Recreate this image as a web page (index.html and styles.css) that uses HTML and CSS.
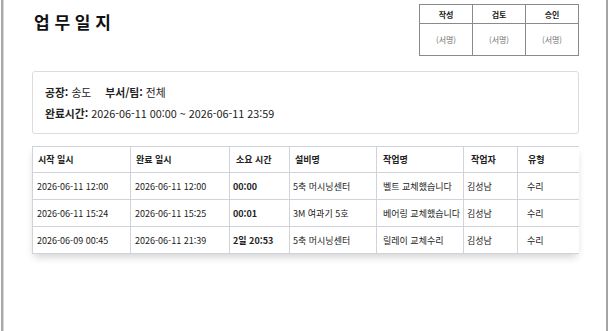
FILE: index.html
```html
<!DOCTYPE html>
<html lang="ko">
<head>
<meta charset="utf-8">
<title>업무일지</title>
<link rel="stylesheet" href="styles.css">
</head>
<body>
<div class="frame">
  <div class="page">
    <header class="top">
      <h1 class="title">업 무 일 지</h1>
      <table class="approval">
        <tr class="ap-head"><th>작성</th><th>검토</th><th>승인</th></tr>
        <tr class="ap-sign"><td>(서명)</td><td>(서명)</td><td>(서명)</td></tr>
      </table>
    </header>

    <section class="info">
      <div class="info-line">
        <span class="item"><b>공장:</b> 송도</span>
        <span class="item"><b>부서/팀:</b> 전체</span>
      </div>
      <div class="info-line">
        <span class="item"><b>완료시간:</b> 2026-06-11 00:00 ~ 2026-06-11 23:59</span>
      </div>
    </section>

    <table class="log">
      <colgroup>
        <col class="c1"><col class="c2"><col class="c3"><col class="c4"><col class="c5"><col class="c6"><col class="c7">
      </colgroup>
      <thead>
        <tr><th>시작 일시</th><th>완료 일시</th><th>소요 시간</th><th>설비명</th><th>작업명</th><th>작업자</th><th>유형</th></tr>
      </thead>
      <tbody>
        <tr><td>2026-06-11 12:00</td><td>2026-06-11 12:00</td><td class="dur">00:00</td><td>5축 머시닝센터</td><td>벨트 교체했습니다</td><td>김성남</td><td>수리</td></tr>
        <tr><td>2026-06-11 15:24</td><td>2026-06-11 15:25</td><td class="dur">00:01</td><td>3M 여과기 5호</td><td>베어링 교체했습니다</td><td>김성남</td><td>수리</td></tr>
        <tr><td>2026-06-09 00:45</td><td>2026-06-11 21:39</td><td class="dur">2일 20:53</td><td>5축 머시닝센터</td><td>릴레이 교체수리</td><td>김성남</td><td>수리</td></tr>
      </tbody>
    </table>
  </div>
</div>
</body>
</html>
```

FILE: styles.css
```css
* { box-sizing: border-box; }

html, body {
  margin: 0;
  padding: 0;
  background: #ffffff;
}

body {
  font-family: "Noto Sans CJK KR", "Noto Sans", sans-serif;
  color: #222;
}

.frame {
  width: 607px;
  height: 331px;
  border-left: 2px solid #a9a9a9;
  border-right: 2px solid #a4a4a4;
  box-shadow: inset 1px 0 0 #d8d8d8;
  margin-left: 1px;
  overflow: hidden;
}

.page {
  padding: 4px 27px 0 29px;
}

.top {
  display: flex;
  justify-content: space-between;
  align-items: flex-start;
}

.title {
  margin: 8px 0 0 2px;
  font-size: 17px;
  line-height: 20px;
  font-weight: 700;
  color: #111;
  letter-spacing: 0;
}

.approval {
  border-collapse: collapse;
  width: 160px;
  table-layout: fixed;
  font-size: 8px;
}

.approval th,
.approval td {
  border: 1px solid #8a8a8a;
  text-align: center;
  padding: 0;
}

.approval th {
  height: 19px;
  font-weight: 700;
  color: #222;
}

.approval td {
  height: 32px;
  color: #6f6f6f;
}

.info {
  margin-top: 15px;
  border: 1px solid #dcdcdc;
  border-radius: 3px;
  padding: 10px 12px 9px;
  font-size: 10.8px;
  line-height: 21px;
  color: #222;
}

.info-line {
  display: flex;
  gap: 14px;
}

.info b {
  font-weight: 700;
}

.log {
  margin-top: 12px;
  width: 546px;
  border-collapse: collapse;
  table-layout: fixed;
  font-size: 9px;
  box-shadow: 0 5px 8px -2px rgba(0, 0, 0, 0.18);
  background: #fff;
}

.c1 { width: 98px; }
.c2 { width: 99px; }
.c3 { width: 60px; }
.c4 { width: 87px; }
.c5 { width: 87px; }
.c6 { width: 54px; }
.c7 { width: 61px; }

.log th,
.log td {
  border-top: 1px solid #d2d2da;
  border-bottom: 1px solid #d2d2da;
  border-left: 1px solid #d2d2da;
  text-align: left;
  white-space: nowrap;
  overflow: hidden;
}

.log th {
  height: 26px;
  padding: 0 5px;
  font-weight: 700;
  color: #222;
}

.log td {
  height: 27px;
  padding: 0 3px;
  color: #222;
}

.log th:nth-child(3),
.log th:nth-child(5) { padding-left: 6px; }
.log th:nth-child(6) { padding-left: 7px; }
.log th:nth-child(7) { padding-left: 10px; }
.log td:nth-child(1),
.log td:nth-child(2) { padding-left: 4px; }
.log td:nth-child(5) { padding-left: 6px; }
.log td:nth-child(7) { padding-left: 9px; }

.log td.dur {
  font-weight: 700;
}
```
